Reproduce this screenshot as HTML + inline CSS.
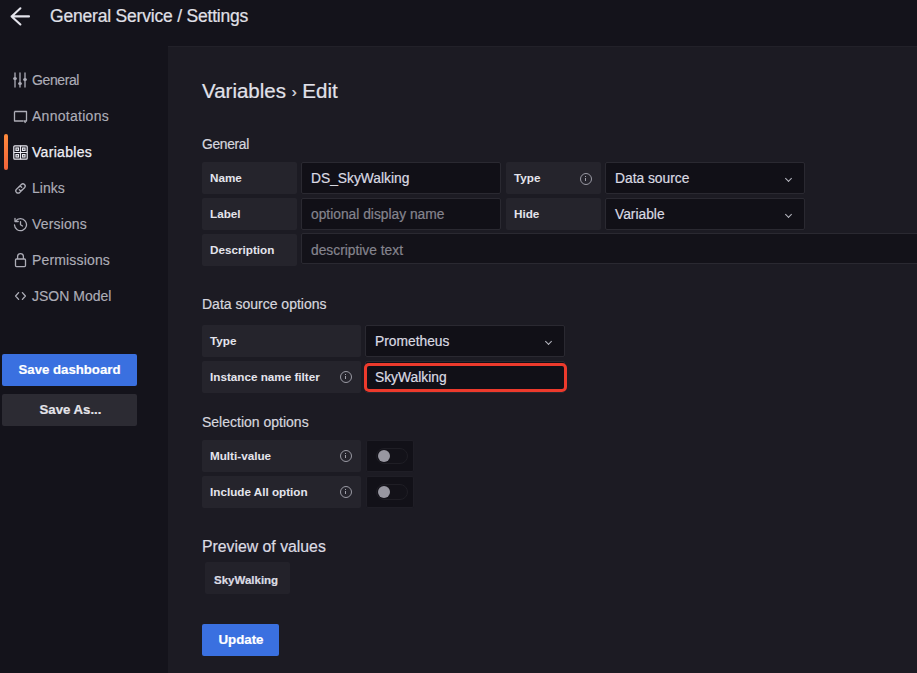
<!DOCTYPE html>
<html><head><meta charset="utf-8">
<style>
*{box-sizing:border-box;margin:0;padding:0}
html,body{width:917px;height:673px;overflow:hidden;background:#14131b;font-family:"Liberation Sans",sans-serif;color:#d4d4dc}
.a{position:absolute}
.t{position:absolute;white-space:nowrap;line-height:1;-webkit-text-stroke:0.2px currentColor}
#main{position:absolute;left:168px;top:46px;width:749px;height:627px;background:#1c1b23;border-top:1px solid #222129}
.nav{position:absolute;left:32px;font-size:14px;color:#adadb7;line-height:1;white-space:nowrap;-webkit-text-stroke:0.15px currentColor}
.lbl{position:absolute;background:#25242c;border-radius:2px;height:32px}
.lbl span{position:absolute;left:8px;top:10px;font-size:11.7px;font-weight:bold;color:#e4e4ec;white-space:nowrap;line-height:1}
.inp{position:absolute;background:#111017;border:1px solid #2a2931;border-radius:2px;height:32px}
.inp span{position:absolute;left:9px;top:9px;font-size:13.8px;color:#dadae2;white-space:nowrap;line-height:1;-webkit-text-stroke:0.2px currentColor}
.inp span.ph{color:#85848e}
.chev{position:absolute;right:13.5px;top:12.5px;width:5px;height:5px;border-right:1.6px solid #b8b8c2;border-bottom:1.6px solid #b8b8c2;transform:rotate(45deg)}
.info{position:absolute;width:12px;height:12px;border:1.2px solid #9a9aa4;border-radius:50%}
.info:after{content:"";position:absolute;left:3.9px;top:3.7px;width:1.5px;height:3.6px;background:#a0a0aa}
.info:before{content:"";position:absolute;left:3.9px;top:1.5px;width:1.5px;height:1.4px;background:#a0a0aa}
.h{position:absolute;font-size:14px;color:#d6d6de;white-space:nowrap;line-height:1;-webkit-text-stroke:0.2px currentColor}
.tog{position:absolute;width:48px;height:32px;background:#121118;border:1px solid #1f1e26;border-radius:2px}
.tog i{position:absolute;left:9px;top:7px;width:32px;height:16px;border:1px solid #1f1e25;border-radius:8px;background:#131219}
.tog b{position:absolute;left:11px;top:8.5px;width:12px;height:12px;border-radius:50%;background:#9897a1}
</style></head><body>
<!-- top bar -->
<svg class="a" style="left:0;top:0" width="40" height="34" viewBox="0 0 40 34"><path d="M29 16.4H11.6M20.4 8.3L11.6 16.4L20.4 24.5" fill="none" stroke="#e4e4ec" stroke-width="2.1" stroke-linecap="round" stroke-linejoin="round"/></svg>
<div class="t" style="left:50px;top:7.6px;font-size:17.5px;letter-spacing:-0.2px;color:#e0e0e8">General Service / Settings</div>

<!-- sidebar -->
<svg class="a" style="left:12px;top:72px" width="16" height="16" viewBox="0 0 16 16"><g stroke="#adadb7" stroke-width="1.3" fill="none" stroke-linecap="round"><path d="M3 1v14M8 1v14M13 1v14"/></g><g fill="#adadb7"><ellipse cx="3" cy="6.5" rx="1.9" ry="1.6"/><ellipse cx="8" cy="11.5" rx="1.9" ry="1.6"/><ellipse cx="13" cy="7.5" rx="1.9" ry="1.6"/></g></svg>
<div class="nav" style="top:72.6px;letter-spacing:-0.4px">General</div>
<svg class="a" style="left:13px;top:110px" width="15" height="14" viewBox="0 0 15 14"><path d="M1.5 1.5h12v9.5h-2.2l1.2 2M1.5 1.5v9.5h9" fill="none" stroke="#adadb7" stroke-width="1.3" stroke-linejoin="round"/></svg>
<div class="nav" style="top:108.6px;letter-spacing:0.28px">Annotations</div>
<div class="a" style="left:4px;top:133.5px;width:4px;height:36.5px;background:linear-gradient(180deg,#ff8a3c,#f3623a);border-radius:2px"></div>
<svg class="a" style="left:13px;top:145px" width="15" height="15" viewBox="0 0 15 15"><g fill="none" stroke="#e8e8f0" stroke-width="1.2"><rect x="0.8" y="0.8" width="13.4" height="13.4" rx="1"/><path d="M7.5 0.8v13.4M0.8 7.5h13.4"/><rect x="3" y="3" width="2.4" height="2.4"/><rect x="9.6" y="3" width="2.4" height="2.4"/><rect x="9.6" y="9.6" width="2.4" height="2.4"/><rect x="3" y="9.6" width="2.4" height="2.4"/></g></svg>
<div class="nav" style="top:144.6px;color:#f0f0f6;-webkit-text-stroke:0.25px #f0f0f6;letter-spacing:0.3px">Variables</div>
<svg class="a" style="left:13px;top:181px" width="15" height="15" viewBox="0 0 15 15"><g fill="none" stroke="#adadb7" stroke-width="1.3" stroke-linecap="round"><path d="M6.2 5.6L8.3 3.5a2.2 2.2 0 0 1 3.2 3.2L9.4 8.8a2.2 2.2 0 0 1-3.1 0"/><path d="M8.8 9.4L6.7 11.5a2.2 2.2 0 0 1-3.2-3.2L5.6 6.2a2.2 2.2 0 0 1 3.1 0"/></g></svg>
<div class="nav" style="top:180.6px">Links</div>
<svg class="a" style="left:13px;top:217px" width="15" height="15" viewBox="0 0 15 15"><g fill="none" stroke="#adadb7" stroke-width="1.3" stroke-linecap="round" stroke-linejoin="round"><path d="M2.6 4.2A6 6 0 1 1 1.5 8"/><path d="M2 1.3v3.2h3.2"/><path d="M7.5 4.6v3.1l2 1.3"/></g></svg>
<div class="nav" style="top:216.6px;letter-spacing:0.16px">Versions</div>
<svg class="a" style="left:13px;top:252px" width="15" height="16" viewBox="0 0 15 16"><g fill="none" stroke="#adadb7" stroke-width="1.3"><rect x="2.5" y="7" width="10" height="7.6" rx="1"/><path d="M4.6 7V4.6a2.9 2.9 0 0 1 5.8 0V7"/></g></svg>
<div class="nav" style="top:252.6px;letter-spacing:0.16px">Permissions</div>
<svg class="a" style="left:13px;top:289px" width="15" height="14" viewBox="0 0 15 14"><g fill="none" stroke="#adadb7" stroke-width="1.3" stroke-linecap="round" stroke-linejoin="round"><path d="M5.6 3.6L2.6 7L5.6 10.4M9.4 3.6L12.4 7L9.4 10.4"/></g></svg>
<div class="nav" style="top:288.6px">JSON Model</div>

<div class="a" style="left:2px;top:354px;width:135px;height:32px;background:#3a70e0;border-radius:2px"></div>
<div class="t" style="left:2px;top:363px;width:135px;text-align:center;font-size:13.2px;font-weight:bold;color:#fff">Save dashboard</div>
<div class="a" style="left:2px;top:394px;width:135px;height:32px;background:#2c2b33;border-radius:2px"></div>
<div class="t" style="left:2px;top:403px;width:137px;text-align:center;font-size:13.2px;font-weight:bold;color:#e4e4ea">Save As...</div>

<!-- main -->
<div id="main"></div>
<div class="t" style="left:202px;top:80.6px;font-size:20.5px;color:#e2e2ea">Variables <span style="font-size:15px;position:relative;top:-1px">›</span> Edit</div>
<div class="h" style="left:202px;top:138.4px;font-size:13.8px;letter-spacing:-0.3px">General</div>

<div class="lbl" style="left:202px;top:162px;width:95px"><span>Name</span></div>
<div class="inp" style="left:301px;top:162px;width:200px"><span>DS_SkyWalking</span></div>
<div class="lbl" style="left:506px;top:162px;width:95px"><span>Type</span><i class="info" style="left:74px;top:11px"></i></div>
<div class="inp" style="left:605px;top:162px;width:200px"><span>Data source</span><i class="chev"></i></div>

<div class="lbl" style="left:202px;top:198px;width:95px"><span>Label</span></div>
<div class="inp" style="left:301px;top:198px;width:200px"><span class="ph">optional display name</span></div>
<div class="lbl" style="left:506px;top:198px;width:95px"><span>Hide</span></div>
<div class="inp" style="left:605px;top:198px;width:200px"><span>Variable</span><i class="chev"></i></div>

<div class="lbl" style="left:202px;top:234px;width:95px"><span>Description</span></div>
<div class="inp" style="left:301px;top:233px;width:630px;height:31px;background:#131219;border-color:#2a2931"><span class="ph" style="top:9.5px">descriptive text</span></div>

<div class="h" style="left:202px;top:296.8px">Data source options</div>
<div class="lbl" style="left:202px;top:325px;width:159px"><span>Type</span></div>
<div class="inp" style="left:365px;top:325px;width:200px"><span>Prometheus</span><i class="chev"></i></div>
<div class="lbl" style="left:202px;top:361px;width:159px"><span>Instance name filter</span><i class="info" style="left:138px;top:10px"></i></div>
<div class="inp" style="left:365px;top:361px;width:200px"><span>SkyWalking</span></div>
<div class="a" style="left:364px;top:363px;width:203px;height:29px;border:3px solid #ec3a2c;border-radius:5px"></div>

<div class="h" style="left:202px;top:415.1px">Selection options</div>
<div class="lbl" style="left:202px;top:440px;width:159px"><span>Multi-value</span><i class="info" style="left:138px;top:10px"></i></div>
<div class="tog" style="left:366px;top:440px"><i></i><b></b></div>
<div class="lbl" style="left:202px;top:476px;width:159px"><span>Include All option</span><i class="info" style="left:138px;top:10px"></i></div>
<div class="tog" style="left:366px;top:476px"><i></i><b></b></div>

<div class="t" style="left:202px;top:538.9px;font-size:15.8px;color:#dcdce4">Preview of values</div>
<div class="a" style="left:205px;top:562px;width:85px;height:32px;background:#23222a;border-radius:2px"></div>
<div class="t" style="left:214px;top:574.9px;font-size:11.5px;font-weight:bold;color:#dcdce4">SkyWalking</div>

<div class="a" style="left:202px;top:624px;width:77px;height:32px;background:#3a70e0;border-radius:2px"></div>
<div class="t" style="left:202px;top:632.5px;width:78px;text-align:center;font-size:13.3px;font-weight:bold;color:#fff">Update</div>
</body></html>
